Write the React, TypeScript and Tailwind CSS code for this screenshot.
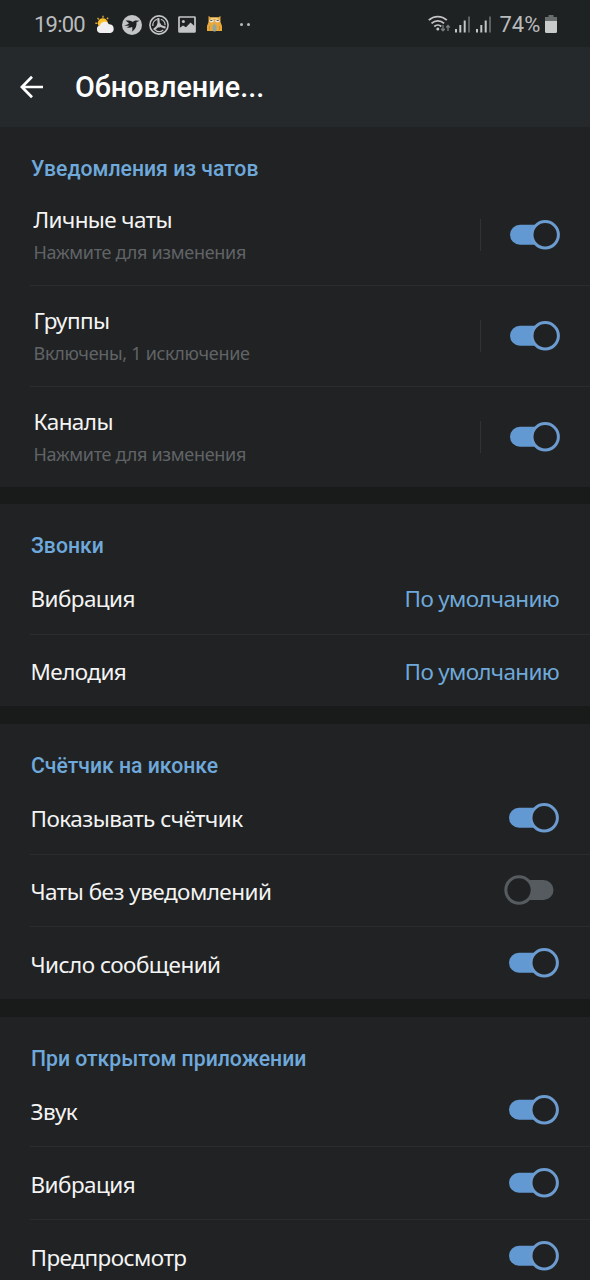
import React, { useState } from 'react';

const Toggle = ({ on, onClick }: any) => (
  <button onClick={onClick} role="switch" aria-checked={on} className={`block shrink-0 ${on ? '' : 'mr-[5px]'}`}>
    <svg width="50" height="30" viewBox="0 0 50 30" className="block">
      {on ? (
        <>
          <rect x="0" y="4.8" width="40" height="20" rx="10" fill="#6399d3" />
          <circle cx="35.2" cy="14.8" r="13.2" fill="#1f2122" stroke="#6c9bd0" strokeWidth="3" />
        </>
      ) : (
        <>
          <rect x="10" y="5" width="39.5" height="20" rx="10" fill="#565b60" />
          <circle cx="15" cy="15" r="13.2" fill="#1f2122" stroke="#565b60" strokeWidth="3" />
        </>
      )}
    </svg>
  </button>
);

const Section = ({ title, children }: any) => (
  <section className="bg-[#202223] mb-[17.45px]">
    <h2 className="h-[58px] pl-[31px] pt-[26px] font-[Roboto] font-medium text-[21.2px] leading-[32px] text-[#6fa9db]">
      {title}
    </h2>
    <div>{children}</div>
  </section>
);

const Divider = () => <div className="h-px ml-[30px] bg-[#2a2c2d]" />;

const ChatRow = ({ title, hint }: any) => {
  const [on, setOn] = useState(true);
  return (
    <div className="flex items-center h-[99.9px] pl-[33.5px] pr-[30px]">
      <div className="flex-1 pt-[4px]">
        <div className="text-[22.5px] leading-[32px] tracking-[-0.6px] text-[#f4f4f4]">{title}</div>
        <div className="text-[18px] leading-[33px] tracking-[-0.3px] text-[#606467]">{hint}</div>
      </div>
      <div className="w-px h-8 mr-[29px] bg-[#313435]" />
      <Toggle on={on} onClick={() => setOn(!on)} />
    </div>
  );
};

const SwitchRow = ({ title, checked }: any) => {
  const [on, setOn] = useState(checked);
  return (
    <div className="flex items-center justify-between h-[71.8px] pl-[30.5px] pr-[31px]">
      <span className="pt-[3px] text-[22.5px] leading-[32px] tracking-[-0.53px] text-[#f4f4f4]">{title}</span>
      <Toggle on={on} onClick={() => setOn(!on)} />
    </div>
  );
};

const ValueRow = ({ title, value }: any) => (
  <div className="flex items-center justify-between h-[71.6px] pt-[2px] pl-[30.5px] pr-[31px] text-[22.5px] leading-[32px] tracking-[-0.58px]">
    <span className="text-[#f4f4f4]">{title}</span>
    <span className="tracking-[-0.68px] text-[#6fa9db]">{value}</span>
  </div>
);

const WeatherIcon = () => (
  <svg width="20" height="20" viewBox="0 0 20 20">
    <g stroke="#d9a536" strokeWidth="1.4">
      <path d="M8 .8v2M2.5 3l1.4 1.4M.3 8.3h2M13.2 2.7l-1.3 1.4M2.5 13.5l1.4-1.3" />
    </g>
    <circle cx="7.8" cy="8.2" r="5" fill="#fbc02d" />
    <path d="M5.5 18a3.8 3.8 0 0 1-.6-7.500A5 5 0 0 1 14 9.2a4.5 4.5 0 0 1 1.5 8.8z" fill="#f0f0f0" />
  </svg>
);

const BirdIcon = () => (
  <svg width="20" height="20" viewBox="0 0 20 20">
    <circle cx="10" cy="10" r="10" fill="#c3c5c6" />
    <path d="M2 10.500c2-.2 3.500-.8 5-2.200L3.500 5.600c2.700-.3 5.300.2 7.500 1.300.8-1 1.700-1.500 2.900-1.500l3.600.3-3 1.500c.4 3.800-.9 7-4.700 9.600.7-1.800.8-3.400.3-4.700-1.800.7-3.900.8-5.800.2 1.500-.4 2.500-1 3.200-1.900-1.800.5-3.600.5-5.500.1z" fill="#1f2223" />
  </svg>
);

const FanIcon = () => (
  <svg width="20" height="20" viewBox="0 0 20 20" fill="none" stroke="#c3c5c6">
    <circle cx="10" cy="10" r="9.1" strokeWidth="1.6" />
    <path d="M8.200 4.200a6.200 6.200 0 0 0-4.300 6.800M11.800 4.200a6.200 6.200 0 0 1 4.300 6M6.200 15a6.200 6.200 0 0 0 8 0" strokeWidth="1.2" />
    <path d="M9.800 10.200L9.300 3M9.800 10.200l6.700 2.600M9.800 10.200l-5 4.600" strokeWidth="2.2" />
    <circle cx="10" cy="10.3" r="2.2" fill="#c3c5c6" stroke="none" />
  </svg>
);

const PictureIcon = () => (
  <svg width="18" height="17" viewBox="0 0 18 17">
    <rect x="1" y="1" width="16" height="15" rx=".6" fill="none" stroke="#c3c5c6" strokeWidth="1.7" />
    <circle cx="5.4" cy="5.4" r="1.5" fill="#c3c5c6" />
    <path d="M1.5 12l3.500-2.500 3 1.700L12.500 6.500l4.500 4v5.500H1.5z" fill="#c3c5c6" />
  </svg>
);

const CatIcon = () => (
  <svg width="15" height="16" viewBox="0 0 15 16">
    <path d="M1.500 0l2.500 1.500h7L13.500 0v6l1.500 4v5H0v-5l1.500-4z" fill="#e9a83c" />
    <path d="M3.5 1.500h8l-1 1.500h-6z" fill="#f6d37b" />
    <ellipse cx="4.6" cy="4.8" rx="2.4" ry="1.6" fill="#e6e6dc" />
    <ellipse cx="10.4" cy="4.8" rx="2.4" ry="1.6" fill="#e6e6dc" />
    <path d="M3.3 4.500h2M9.700 4.500h2" stroke="#4b4438" strokeWidth=".9" />
    <path d="M5.500 10.500l2-3 2 3v3l-1 2h-2l-1-2z" fill="#8fa6a0" />
    <path d="M2.500 10v4M12.500 10v4" stroke="#c98a2c" strokeWidth=".8" />
  </svg>
);

const WifiIcon = () => (
  <svg width="23" height="18" viewBox="0 0 23 18" fill="none" stroke="#c3c5c6" strokeWidth="1.8">
    <path d="M.8 5.200c5-4.900 13-4.900 18 0M3.500 8.400c3.700-3.400 9-3.400 12.600 0M6.300 11.500c2-1.900 5-1.900 7 0" />
    <circle cx="9.8" cy="14" r="1.5" fill="#c3c5c6" stroke="none" />
    <path d="M15 10v5.500M13.2 13.700l1.800 2 1.800-2M20 16v-5M18.2 12.500l1.800-2 1.800 2" stroke="#7b7e7f" strokeWidth="1.3" />
  </svg>
);

const SignalIcon = () => (
  <svg width="16" height="17" viewBox="0 0 16 17">
    <path d="M0 13h2v3.500H0zM4.300 9h2v7.500h-2zM8.700 4.500h2v12h-2z" fill="#c3c5c6" />
    <path d="M13 .5h2v16h-2z" fill="#5d6061" />
  </svg>
);

const BatteryIcon = () => (
  <svg width="12" height="18" viewBox="0 0 12 18">
    <path d="M3.500 0h5v2H12v5H0V2h3.500z" fill="#6a6d6e" />
    <path d="M0 6h12v10.500a1.500 1.500 0 0 1-1.500 1.500h-9A1.500 1.500 0 0 1 0 16.500z" fill="#c9cbcb" />
  </svg>
);

const StatusBar = () => (
  <div className="flex items-center justify-between h-[47px] pl-[34px] pr-[33px] bg-[#1f2223] font-[Roboto] text-[#b9bbbc]">
    <div className="flex items-center pt-[2px]">
      <span className="w-[52px] text-[22px] leading-[28px] tracking-[-0.8px]">19:00</span>
      <div className="flex items-center ml-[9px] gap-[7px]">
        <WeatherIcon />
        <BirdIcon />
        <FanIcon />
      </div>
      <div className="ml-[9px]"><PictureIcon /></div>
      <div className="ml-[11px] -mt-[2px]"><CatIcon /></div>
      <div className="flex gap-[4px] ml-[18px]">
        <i className="size-[3px] rounded-full bg-[#b9bbbc]" />
        <i className="size-[3px] rounded-full bg-[#b9bbbc]" />
      </div>
    </div>
    <div className="flex items-center pt-[1px]">
      <WifiIcon />
      <div className="flex gap-[5px] ml-[4px]">
        <SignalIcon />
        <SignalIcon />
      </div>
      <span className="w-[41px] ml-[7.5px] mr-[4.5px] pt-[2px] text-[22px] leading-[28px]">74%</span>
      <BatteryIcon />
    </div>
  </div>
);

const Header = () => (
  <header className="flex items-center h-[80px] pl-[20px] bg-[#26292c]">
    <svg width="24" height="24" viewBox="0 0 24 24" fill="none" stroke="#fff" strokeWidth="2.7">
      <path d="M23 12H2M12 1.700L1.900 12 12 22.300" />
    </svg>
    <h1 className="ml-[31px] font-[Roboto] font-medium text-[28.8px] leading-[36px] text-white">Обновление...</h1>
  </header>
);

const App: React.FC = () => (
  <div className="w-full h-screen overflow-hidden bg-[#191b1a] font-['Noto_Sans',sans-serif]">
    <StatusBar />
    <Header />
    <Section title="Уведомления из чатов">
      <ChatRow title="Личные чаты" hint="Нажмите для изменения" />
      <Divider />
      <ChatRow title="Группы" hint="Включены, 1 исключение" />
      <Divider />
      <ChatRow title="Каналы" hint="Нажмите для изменения" />
    </Section>
    <Section title="Звонки">
      <ValueRow title="Вибрация" value="По умолчанию" />
      <Divider />
      <ValueRow title="Мелодия" value="По умолчанию" />
    </Section>
    <Section title="Счётчик на иконке">
      <SwitchRow title="Показывать счётчик" checked />
      <Divider />
      <SwitchRow title="Чаты без уведомлений" checked={false} />
      <Divider />
      <SwitchRow title="Число сообщений" checked />
    </Section>
    <Section title="При открытом приложении">
      <SwitchRow title="Звук" checked />
      <Divider />
      <SwitchRow title="Вибрация" checked />
      <Divider />
      <SwitchRow title="Предпросмотр" checked />
    </Section>
  </div>
);

export default App;
